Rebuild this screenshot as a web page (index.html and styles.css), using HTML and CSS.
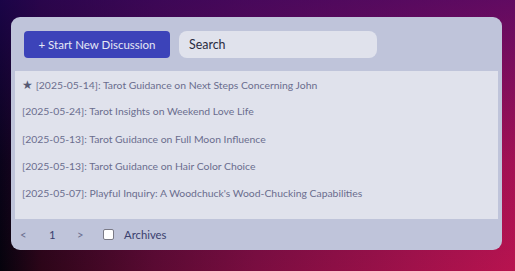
FILE: index.html
```html
<!DOCTYPE html>
<html>
<head>
<meta charset="utf-8">
<link rel="stylesheet" href="styles.css">
</head>
<body>
<div class="card">
  <div class="toolbar">
    <button class="new-btn">+ Start New Discussion</button>
    <div class="search">Search</div>
  </div>
  <ul class="list">
    <li class="item"><span class="star">★</span> [2025-05-14]: Tarot Guidance on Next Steps Concerning John</li>
    <li class="item">[2025-05-24]: Tarot Insights on Weekend Love Life</li>
    <li class="item">[2025-05-13]: Tarot Guidance on Full Moon Influence</li>
    <li class="item">[2025-05-13]: Tarot Guidance on Hair Color Choice</li>
    <li class="item">[2025-05-07]: Playful Inquiry: A Woodchuck's Wood-Chucking Capabilities</li>
  </ul>
  <div class="footer">
    <span class="nav">&lt;</span>
    <span class="page">1</span>
    <span class="nav">&gt;</span>
    <label class="archives"><span class="box"></span>Archives</label>
  </div>
</div>
</body>
</html>
```
FILE: styles.css
```css
html, body {
  margin: 0;
  height: 100%;
}
body {
  box-sizing: border-box;
  padding: 17px 13px 21px 11px;
  font-family: Lato, "Noto Sans", sans-serif;
  background:
    linear-gradient(to bottom, rgba(40, 5, 110, 0.6), rgba(40, 5, 110, 0.15) 60%, rgba(40, 5, 110, 0) 100%),
    linear-gradient(90deg, #05030c 0%, #2c0518 8%, #5a0a32 30%, #7a0d40 50%, #a0114a 80%, #b8134f 100%);
}
.card {
  height: 100%;
  box-sizing: border-box;
  background: #bfc4da;
  border-radius: 9px;
  display: flex;
  flex-direction: column;
}
.toolbar {
  display: flex;
  gap: 9px;
  padding: 14px 13px 13px;
}
.new-btn {
  width: 146px;
  height: 27px;
  border: none;
  border-radius: 4px;
  background: #3c43b9;
  color: #e6e8f5;
  font-family: inherit;
  font-size: 11.5px;
  padding: 0;
}
.search {
  width: 188px;
  height: 27px;
  line-height: 27px;
  padding-left: 10px;
  border-radius: 8px;
  background: #e0e2ec;
  color: #2a2b40;
  font-size: 12.4px;
}
.list {
  list-style: none;
  margin: 0 4px;
  padding: 0 0 12px;
  background: #e0e2ec;
  flex: 1;
}
.item {
  height: 27.3px;
  line-height: 27.3px;
  padding-left: 7px;
  font-size: 10.4px;
  color: #6a6d8e;
  white-space: nowrap;
}
.star {
  color: #555872;
  font-size: 12px;
}
.footer {
  display: flex;
  align-items: center;
  height: 31px;
  padding-left: 9px;
  font-size: 11.3px;
  color: #3a3f6e;
}
.nav {
  color: #6a6e8e;
  width: 7px;
}
.page {
  margin: 0 22px;
  width: 6px;
}
.archives {
  display: flex;
  align-items: center;
  margin-left: 19px;
  gap: 10px;
}
.box {
  width: 9px;
  height: 9px;
  border: 1px solid #7a7a86;
  border-radius: 2px;
  background: #ffffff;
}
```
